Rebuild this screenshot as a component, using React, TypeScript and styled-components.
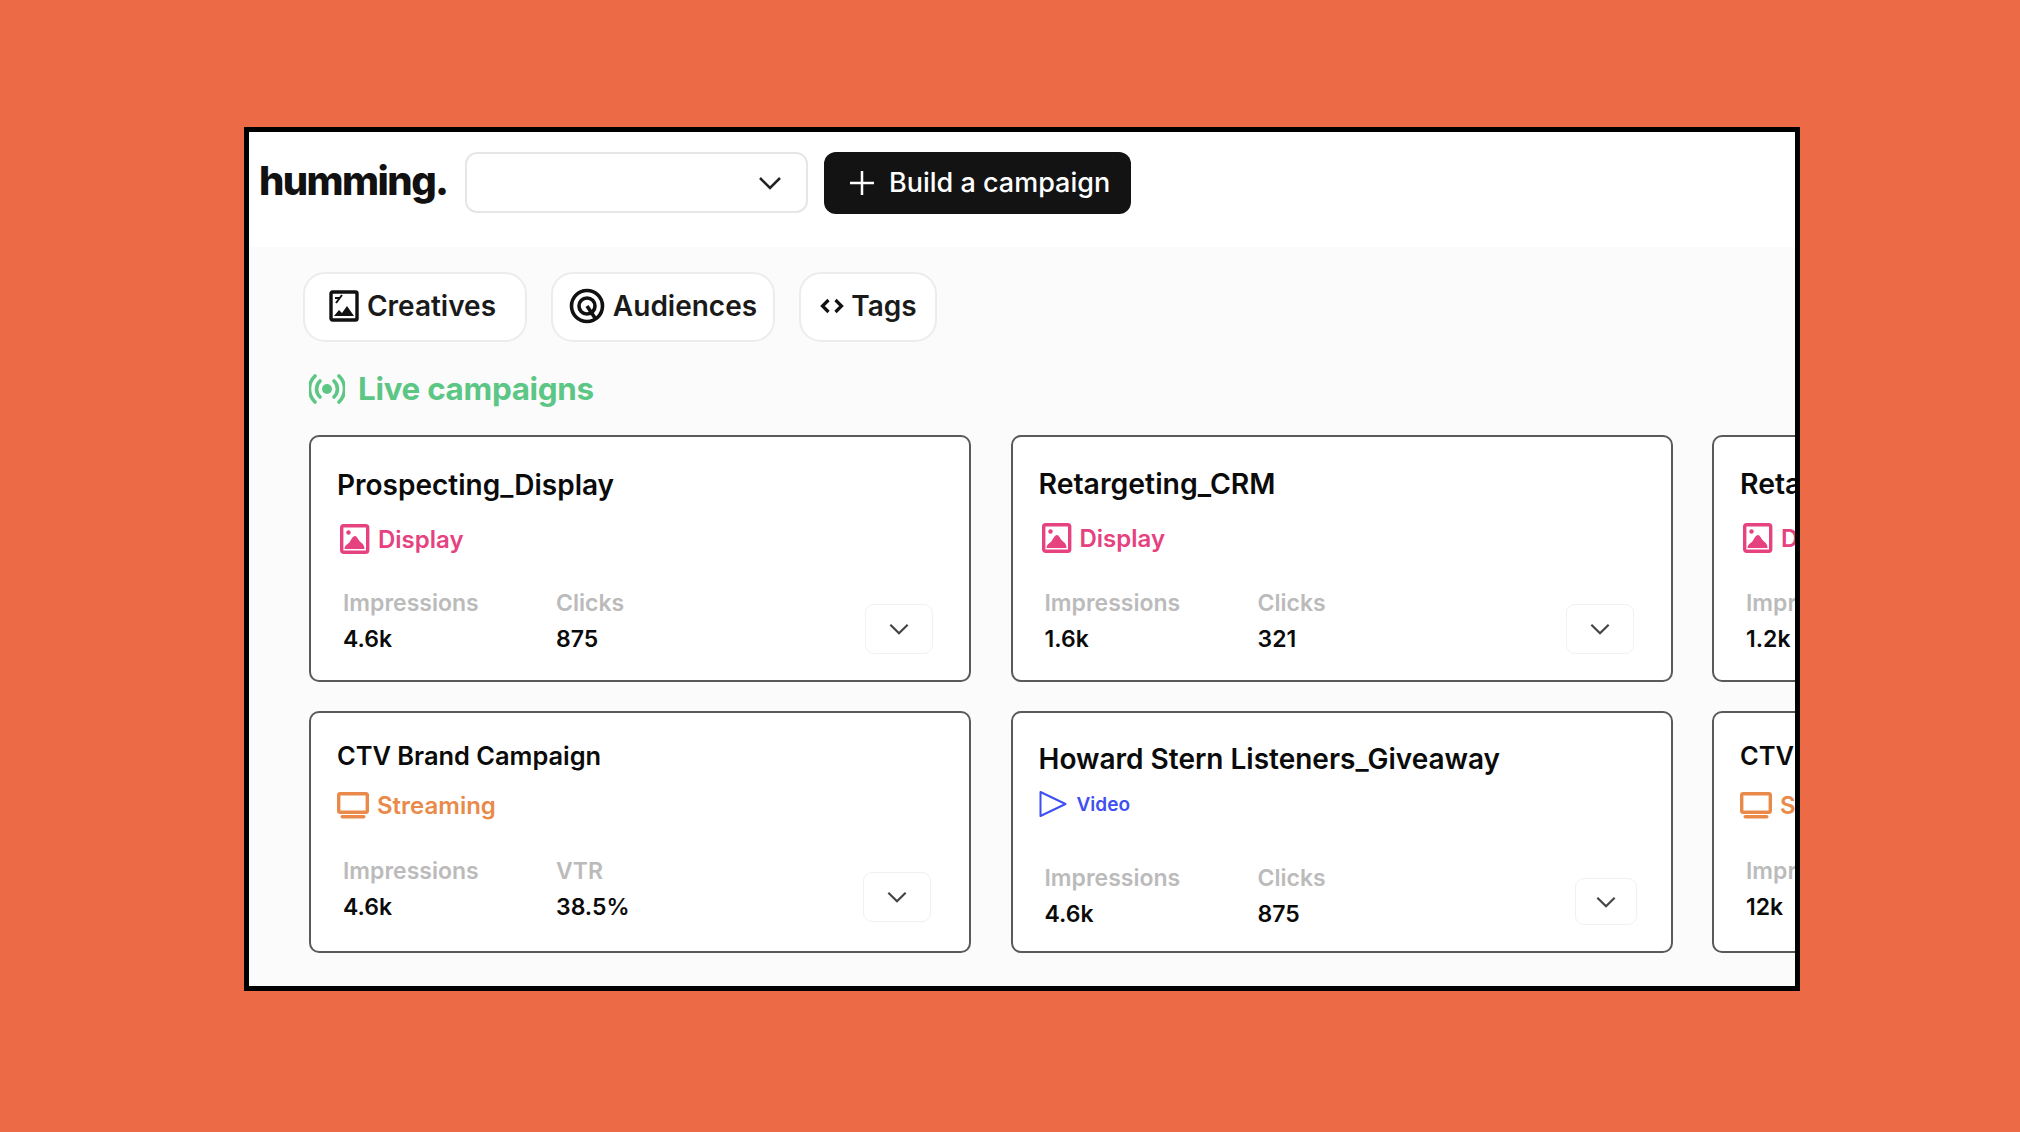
import React from "react";
import styled, { createGlobalStyle } from "styled-components";

const GlobalStyle = createGlobalStyle`
  html, body {
    margin: 0;
    padding: 0;
    background: #ed6a47;
    font-family: Inter, "Liberation Sans", sans-serif;
  }
`;

const Page = styled.div`
  height: 1132px;
  box-sizing: border-box;
  padding: 127px 0 0 244px;
  overflow: hidden;
`;

const Frame = styled.div`
  width: 1556px;
  height: 864px;
  box-sizing: border-box;
  border: 5px solid #000;
  background: #fbfbfb;
  overflow: hidden;
`;

const Header = styled.header`
  height: 115px;
  box-sizing: border-box;
  background: #fff;
  padding: 20px 0 0 10px;
  display: flex;
  align-items: flex-start;
`;

const Logo = styled.div`
  width: 206px;
  height: 62px;
  line-height: 58px;
  font-size: 40px;
  font-weight: 800;
  letter-spacing: -1.6px;
  color: #111;
`;

const Select = styled.div`
  width: 343px;
  height: 61px;
  box-sizing: border-box;
  border: 2px solid #e6e6e6;
  border-radius: 12px;
  background: #fff;
  display: flex;
  align-items: center;
  justify-content: flex-end;
  padding-right: 21px;
  color: #222;
`;

const BuildButton = styled.div`
  width: 307px;
  height: 62px;
  margin-left: 16px;
  box-sizing: border-box;
  border-radius: 12px;
  background: #131313;
  color: #fff;
  display: flex;
  align-items: center;
  padding: 0 0 0 24px;
  gap: 13px;
  font-size: 27px;
  font-weight: 500;
`;

const ButtonLabel = styled.span`
  margin-bottom: 2px;
`;

const Body = styled.main`
  padding: 25px 0 0 54px;
`;

const Tabs = styled.nav`
  display: flex;
  gap: 24px;
`;

const Tab = styled.div<{ $width: number; $gap: number; $endSpace?: number }>`
  width: ${(p) => p.$width}px;
  height: 70px;
  box-sizing: border-box;
  border: 2px solid #ececec;
  border-radius: 22px;
  background: #fff;
  display: flex;
  align-items: center;
  justify-content: center;
  gap: ${(p) => p.$gap}px;
  padding: 0 ${(p) => p.$endSpace ?? 0}px 2px 0;
  font-size: 28px;
  font-weight: 600;
  color: #1a1a1a;
  white-space: nowrap;
`;

const LiveHeading = styled.h2`
  margin: 29px 0 0 6px;
  height: 36px;
  display: flex;
  align-items: center;
  gap: 13px;
  font-size: 31.4px;
  font-weight: 700;
  letter-spacing: -0.3px;
  color: #5cc685;
`;

const CardGrid = styled.div`
  margin: 28px 0 0 6px;
  display: grid;
  grid-template-columns: repeat(3, 662px);
  grid-template-rows: 247px 242px;
  column-gap: 39.5px;
  row-gap: 29px;
`;

const Card = styled.article<{ $top: number }>`
  box-sizing: border-box;
  padding: ${(p) => p.$top}px 0 0 26px;
  border: 2px solid #5a5a5a;
  border-radius: 10px;
  background: #fff;
  position: relative;
`;

const CardTitle = styled.h3<{ $size: number }>`
  margin: 0;
  height: 36px;
  line-height: 36px;
  font-size: ${(p) => p.$size}px;
  font-weight: 600;
  color: #0b0b0b;
  white-space: nowrap;
`;

const Kind = styled.div<{ $color: string; $small?: boolean; $space: number }>`
  margin-top: ${(p) => p.$space}px;
  height: 32px;
  display: flex;
  align-items: center;
  gap: ${(p) => (p.$small ? 10 : 8)}px;
  color: ${(p) => p.$color};
  font-size: ${(p) => (p.$small ? 19 : 24)}px;
  font-weight: 600;
`;

const Stats = styled.div<{ $space: number }>`
  margin: ${(p) => p.$space}px 0 0 6px;
  display: grid;
  grid-template-columns: 213px auto;
  justify-content: start;
  row-gap: 8px;
`;

const StatLabel = styled.div`
  height: 28px;
  line-height: 28px;
  font-size: 23px;
  font-weight: 600;
  color: #bbbbbb;
`;

const StatValue = styled.div`
  height: 28px;
  line-height: 28px;
  font-size: 23px;
  font-weight: 600;
  color: #0b0b0b;
`;

const ExpandButton = styled.div<{ $right: number; $bottom: number; $w: number; $h: number }>`
  position: absolute;
  right: ${(p) => p.$right}px;
  bottom: ${(p) => p.$bottom}px;
  width: ${(p) => p.$w}px;
  height: ${(p) => p.$h}px;
  box-sizing: border-box;
  border: 1.5px solid #f1f1f1;
  border-radius: 9px;
  display: flex;
  align-items: center;
  justify-content: center;
  color: #444;
`;

const Chevron = ({ size = 26 }: { size?: number }) => (
  <svg width={size} height={size} viewBox="0 0 24 24" fill="none" stroke="currentColor" strokeWidth="2">
    <path d="M4 8l8 8 8-8" />
  </svg>
);

const CreativesIcon = () => (
  <svg width="30" height="32" viewBox="0 0 30 32">
    <rect x="2" y="2" width="26" height="28" rx="1.5" fill="none" stroke="#111" strokeWidth="3.4" />
    <path d="M6 8h5M7 13L13 5" fill="none" stroke="#111" strokeWidth="2" />
    <path d="M5 26l5-6 3 3 5-7 7 10z" fill="#111" />
  </svg>
);

const AudienceIcon = () => (
  <svg width="36" height="36" viewBox="0 0 36 36" fill="none" stroke="#111" strokeWidth="3.6">
    <circle cx="18" cy="18" r="15.5" />
    <circle cx="18" cy="18" r="8" />
    <path d="M18 18l8 12" />
  </svg>
);

const TagsIcon = () => (
  <svg width="26" height="20" viewBox="0 0 26 20" fill="none" stroke="#111" strokeWidth="3.2">
    <path d="M9.5 4l-6 6 6 6M16.5 4l6 6-6 6" />
  </svg>
);

const LiveIcon = () => (
  <svg width="36" height="30" viewBox="0 0 36 30" fill="none" stroke="#5cc685" strokeWidth="3.6" strokeLinecap="round">
    <circle cx="18" cy="15" r="5" fill="#5cc685" stroke="none" />
    <path d="M11 7a11 11 0 0 0 0 16M25 7a11 11 0 0 1 0 16" />
    <path d="M6 2a18 18 0 0 0 0 26M30 2a18 18 0 0 1 0 26" />
  </svg>
);

const DisplayIcon = () => (
  <svg width="33" height="30" viewBox="0 0 33 30">
    <rect x="4.7" y="1.7" width="26" height="26.6" rx="2" fill="none" stroke="#e5427f" strokeWidth="3.4" />
    <circle cx="11.5" cy="8.5" r="2.2" fill="#e5427f" />
    <path d="M7.5 25c0-4 4-5 5.5-7.5S16 12 18 12s3 3.5 5 5.5 4.5 3 4.5 7.5z" fill="#e5427f" />
  </svg>
);

const StreamingIcon = () => (
  <svg width="32" height="27" viewBox="0 0 32 27">
    <rect x="1.7" y="1.7" width="28.6" height="18.6" rx="1.5" fill="none" stroke="#e98a4a" strokeWidth="3.4" />
    <rect x="3.5" y="23" width="25" height="3.6" rx="1.8" fill="#e98a4a" />
  </svg>
);

const VideoIcon = () => (
  <svg width="28" height="28" viewBox="0 0 28 28">
    <path d="M1.5 2l25 12-25 12z" fill="none" stroke="#3f4ff0" strokeWidth="2" strokeLinejoin="round" />
  </svg>
);

type Campaign = {
  title: string;
  titleSize: number;
  kind: "Display" | "Streaming" | "Video";
  impressions: string;
  metric: string;
  value: string;
  top: number;
  statSpace: number;
  button: { right: number; bottom: number; w: number; h: number };
};

const campaigns: Campaign[] = [
  { title: "Prospecting_Display", titleSize: 28, kind: "Display", impressions: "4.6k", metric: "Clicks", value: "875", top: 30, statSpace: 34, button: { right: 36, bottom: 26, w: 68, h: 50 } },
  { title: "Retargeting_CRM", titleSize: 28.4, kind: "Display", impressions: "1.6k", metric: "Clicks", value: "321", top: 29, statSpace: 35, button: { right: 37, bottom: 26, w: 68, h: 50 } },
  { title: "Retargeting_CRM", titleSize: 28.4, kind: "Display", impressions: "1.2k", metric: "Clicks", value: "321", top: 29, statSpace: 35, button: { right: 37, bottom: 26, w: 68, h: 50 } },
  { title: "CTV Brand Campaign", titleSize: 25.4, kind: "Streaming", impressions: "4.6k", metric: "VTR", value: "38.5%", top: 25, statSpace: 36, button: { right: 38, bottom: 29, w: 68, h: 50 } },
  { title: "Howard Stern Listeners_Giveaway", titleSize: 28, kind: "Video", impressions: "4.6k", metric: "Clicks", value: "875", top: 28, statSpace: 44, button: { right: 34, bottom: 26, w: 62, h: 47 } },
  { title: "CTV Brand Campaign", titleSize: 25.4, kind: "Streaming", impressions: "12k", metric: "VTR", value: "38.5%", top: 25, statSpace: 36, button: { right: 38, bottom: 29, w: 68, h: 50 } },
];

const kindStyle = {
  Display: { color: "#e5427f", icon: <DisplayIcon />, space: 20 },
  Streaming: { color: "#e98a4a", icon: <StreamingIcon />, space: 15 },
  Video: { color: "#3f4ff0", icon: <VideoIcon />, space: 11 },
};

export default function App() {
  return (
    <>
      <GlobalStyle />
      <Page>
        <Frame>
          <Header>
            <Logo>humming.</Logo>
            <Select>
              <Chevron size={30} />
            </Select>
            <BuildButton>
              <svg width="28" height="28" viewBox="0 0 28 28" fill="none" stroke="#fff" strokeWidth="2.5">
                <path d="M14 2v24M2 14h24" />
              </svg>
              <ButtonLabel>Build a campaign</ButtonLabel>
            </BuildButton>
          </Header>
          <Body>
            <Tabs>
              <Tab $width={224} $gap={8} $endSpace={5}>
                <CreativesIcon />
                Creatives
              </Tab>
              <Tab $width={224} $gap={8}>
                <AudienceIcon />
                Audiences
              </Tab>
              <Tab $width={138} $gap={6}>
                <TagsIcon />
                Tags
              </Tab>
            </Tabs>
            <LiveHeading>
              <LiveIcon />
              Live campaigns
            </LiveHeading>
            <CardGrid>
              {campaigns.map((c, i) => (
                <Card key={i} $top={c.top}>
                  <CardTitle $size={c.titleSize}>{c.title}</CardTitle>
                  <Kind $color={kindStyle[c.kind].color} $small={c.kind === "Video"} $space={kindStyle[c.kind].space}>
                    {kindStyle[c.kind].icon}
                    {c.kind}
                  </Kind>
                  <Stats $space={c.statSpace}>
                    <StatLabel>Impressions</StatLabel>
                    <StatLabel>{c.metric}</StatLabel>
                    <StatValue>{c.impressions}</StatValue>
                    <StatValue>{c.value}</StatValue>
                  </Stats>
                  <ExpandButton $right={c.button.right} $bottom={c.button.bottom} $w={c.button.w} $h={c.button.h}>
                    <Chevron />
                  </ExpandButton>
                </Card>
              ))}
            </CardGrid>
          </Body>
        </Frame>
      </Page>
    </>
  );
}
